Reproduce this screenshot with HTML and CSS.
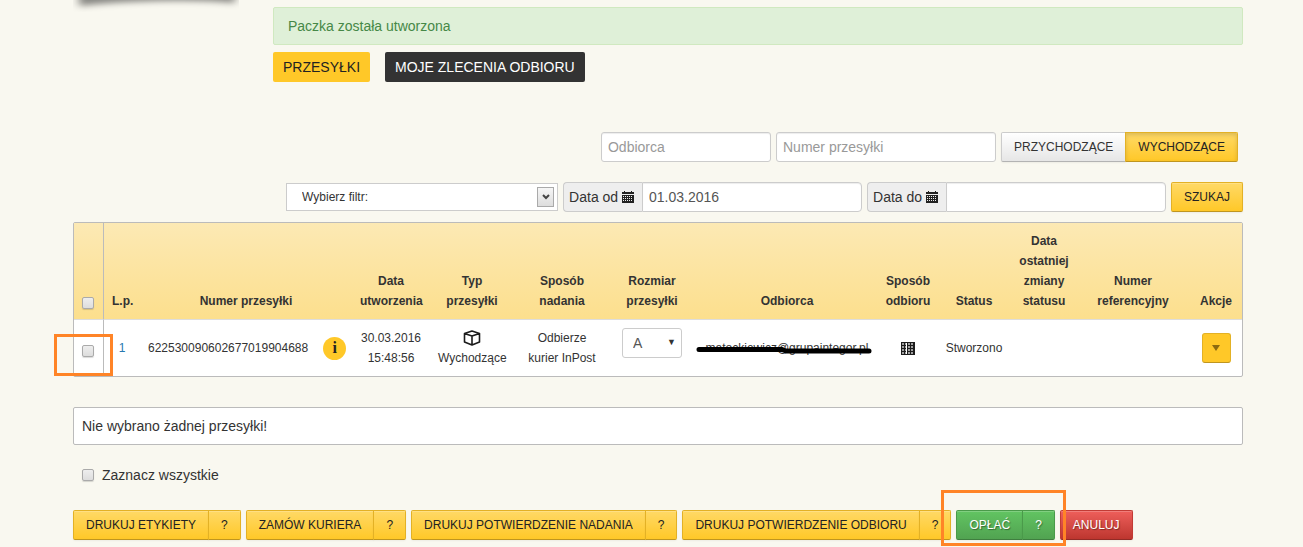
FILE: index.html
```html
<!DOCTYPE html>
<html lang="pl">
<head>
<meta charset="utf-8">
<title>Przesyłki</title>
<link rel="stylesheet" href="styles.css">
</head>
<body>
<svg class="defs" width="0" height="0" aria-hidden="true">
  <symbol id="calendar" viewBox="0 0 12 12">
    <path fill="#222" d="M0 1h2V0h1v1h6V0h1v1h2v2H0zM0 4h12v8H0z"/>
    <path stroke="#eee" stroke-width="1" stroke-dasharray="1 1" d="M1 5.5h10M1 7.5h10M1 9.5h10"/>
  </symbol>
</svg>
<div class="page">
  <header class="top">
    <div class="logo">
      <svg width="166" height="12" viewBox="0 0 166 12" aria-hidden="true">
        <defs>
          <filter id="soft" x="-10%" y="-100%" width="120%" height="300%"><feGaussianBlur stdDeviation="4 3"/></filter>
        </defs>
        <path filter="url(#soft)" fill="#000" fill-opacity=".45" d="M6-12H162V3Q130 0 85 1Q40 2 6 6z"/>
      </svg>
    </div>
    <div class="intro">
      <div class="alert" role="status">Paczka została utworzona</div>
      <nav class="tabs">
        <a class="tab tab-active" href="#">PRZESYŁKI</a>
        <a class="tab" href="#">MOJE ZLECENIA ODBIORU</a>
      </nav>
    </div>
  </header>

  <form class="filters">
    <div class="line line-search">
      <input class="field field-small" type="text" placeholder="Odbiorca" aria-label="Odbiorca">
      <input class="field" type="text" placeholder="Numer przesyłki" aria-label="Numer przesyłki">
      <div class="group">
        <button class="btn btn-light" type="button">PRZYCHODZĄCE</button><button class="btn btn-pressed" type="button">WYCHODZĄCE</button>
      </div>
    </div>
    <div class="line">
      <div class="filter-select">
        <select aria-label="Filtr"><option>Wybierz filtr:</option></select>
        <span class="arrow"><svg width="8" height="6" viewBox="0 0 8 6"><path d="M1 1l3 3 3-3" fill="none" stroke="#444" stroke-width="2"/></svg></span>
      </div>
      <div class="dated">
        <label for="from">Data od <svg width="12" height="12"><use href="#calendar"/></svg></label>
        <input class="field" id="from" type="text" value="01.03.2016">
      </div>
      <div class="dated">
        <label for="to">Data do <svg width="12" height="12"><use href="#calendar"/></svg></label>
        <input class="field" id="to" type="text">
      </div>
      <button class="btn" type="button">SZUKAJ</button>
    </div>
  </form>

  <table class="parcels">
    <colgroup>
      <col class="w-check"><col class="w-lp"><col class="w-number"><col class="w-date"><col class="w-type"><col class="w-send"><col class="w-size"><col class="w-person"><col class="w-pickup"><col class="w-status"><col class="w-change"><col class="w-ref"><col class="w-action">
    </colgroup>
    <thead>
      <tr>
        <th class="check"><input type="checkbox" aria-label="Zaznacz wszystkie"></th>
        <th>L.p.</th>
        <th>Numer przesyłki</th>
        <th>Data utworzenia</th>
        <th>Typ przesyłki</th>
        <th>Sposób nadania</th>
        <th>Rozmiar przesyłki</th>
        <th>Odbiorca</th>
        <th>Sposób odbioru</th>
        <th>Status</th>
        <th>Data ostatniej zmiany statusu</th>
        <th>Numer referencyjny</th>
        <th>Akcje</th>
      </tr>
    </thead>
    <tbody>
      <tr>
        <td class="check"><input type="checkbox" aria-label="Zaznacz przesyłkę 1"><span class="mark mark-row"></span></td>
        <td><a href="#">1</a></td>
        <td><div class="number"><span>622530090602677019904688</span><button class="info" type="button">i</button></div></td>
        <td>30.03.2016 15:48:56</td>
        <td>
          <svg class="box" width="18" height="16" viewBox="0 0 18 16" fill="none" stroke="#1c1c1c" stroke-width="1.6" stroke-linejoin="round"><path d="M9 1L16.500 3.500V12L9 15L1.500 12V3.500zM1.500 3.500L9 6L16.500 3.500M9 6V15"/></svg>
          Wychodzące
        </td>
        <td>Odbierze kurier InPost</td>
        <td class="size"><div class="size-select"><select aria-label="Rozmiar przesyłki"><option>A</option></select><span>▼</span></div></td>
        <td><div class="person">matockiewicz@grupaintegor.pl
          <svg class="scribble" viewBox="0 0 176 8" preserveAspectRatio="none" aria-hidden="true"><path d="M3 3.500H86L90 5H173" fill="none" stroke="#000" stroke-width="5" stroke-linecap="round"/></svg></div></td>
        <td><svg class="locker" width="14" height="13" viewBox="0 0 14 13"><path fill="#1c1c1c" d="M0 0h14v13H0z"/><path d="M1 2h12M1 5h12M1 8h12M1 11h12" stroke="#ccc" stroke-width="1.500" stroke-dasharray="2 1"/><path d="M5.500 1v11" stroke="#fff"/></svg></td>
        <td>Stworzono</td>
        <td></td>
        <td></td>
        <td><button class="more" type="button" aria-label="Akcje"><svg width="8" height="6" viewBox="0 0 8 6"><path d="M0 0h8L4 6z" fill="#8b6a10"/></svg></button></td>
      </tr>
    </tbody>
  </table>

  <div class="notice">Nie wybrano żadnej przesyłki!</div>
  <label class="all"><input type="checkbox"> Zaznacz wszystkie</label>

  <div class="actions">
    <div class="group"><button class="btn" type="button">DRUKUJ ETYKIETY</button><button class="btn" type="button">?</button></div>
    <div class="group"><button class="btn" type="button">ZAMÓW KURIERA</button><button class="btn" type="button">?</button></div>
    <div class="group"><button class="btn" type="button">DRUKUJ POTWIERDZENIE NADANIA</button><button class="btn" type="button">?</button></div>
    <div class="group"><button class="btn" type="button">DRUKUJ POTWIERDZENIE ODBIORU</button><button class="btn" type="button">?</button></div>
    <div class="group"><button class="btn btn-green" type="button">OPŁAĆ</button><button class="btn btn-green" type="button">?</button><span class="mark mark-pay"></span></div>
    <button class="btn btn-red" type="button">ANULUJ</button>
  </div>
</div>
</body>
</html>
```

FILE: styles.css
```css
* { box-sizing: border-box; }
body {
  margin: 0;
  background: #f9f8f0;
  color: #333;
  font: 14px/20px "Liberation Sans", Arial, sans-serif;
}
input, select, button { font: inherit; color: inherit; margin: 0; }
a { color: #2878b0; text-decoration: none; }
.defs { position: absolute; }
.page { padding: 0 60px 7px 73px; }

.top { display: flex; }
.logo { flex: 0 0 200px; }
.logo svg { display: block; }
.intro { flex: 1; padding-top: 7px; }
.alert {
  padding: 8px 14px;
  border: 1px solid #d0e9c0;
  border-radius: 2px;
  background: #dff0d8;
  color: #468847;
}
.tabs { display: flex; gap: 15px; margin-top: 7px; }
.tab { padding: 5px 10px; border-radius: 2px; background: #333; color: #fff; }
.tab-active { background: #ffc828; color: #222; }

.filters { display: flex; flex-direction: column; gap: 20px; margin: 50px 0 10px; }
.line { display: flex; justify-content: flex-end; align-items: center; gap: 5px; }
.line-search { padding-right: 5px; }
.field {
  width: 220px;
  height: 30px;
  padding: 4px 6px;
  border: 1px solid #ccc;
  border-radius: 3px;
  background: #fff;
  color: #555;
  box-shadow: inset 0 1px 1px rgba(0, 0, 0, .075);
}
.field::placeholder { color: #999; opacity: 1; }
.field-small { width: 170px; }

.group { position: relative; display: flex; }
.btn {
  height: 30px;
  padding: 4px 12px;
  border: 1px solid #e3b125;
  border-bottom-color: #bf951f;
  border-radius: 2px;
  background: linear-gradient(#ffd966, #ffc828);
  color: #222;
  font-size: 12px;
  white-space: nowrap;
  box-shadow: inset 0 1px 0 rgba(255, 255, 255, .2), 0 1px 2px rgba(0, 0, 0, .05);
}
.group .btn + .btn { margin-left: -1px; border-radius: 0 2px 2px 0; }
.group .btn:first-child { border-radius: 2px 0 0 2px; }
.btn-light { border-color: #ccc; border-bottom-color: #b3b3b3; background: linear-gradient(#fff, #e6e6e6); color: #333; }
.btn-pressed { box-shadow: inset 0 2px 4px rgba(0, 0, 0, .15); }
.btn-green, .btn-red { color: #fff; text-shadow: 1px 1px 1px rgba(0, 0, 0, .4); }
.btn-green { border-color: #4a9a4a; border-bottom-color: #3f7f3f; background: linear-gradient(#62c462, #51a351); }
.btn-red { border-color: #c23b35; border-bottom-color: #922b26; background: linear-gradient(#ee5f5b, #bd362f); }

.filter-select { position: relative; width: 272px; }
.filter-select select {
  display: block;
  width: 100%;
  height: 28px;
  padding: 0 26px 0 15px;
  border: 1px solid #ccc;
  border-radius: 0;
  background: #fff;
  font-size: 12px;
  appearance: none;
}
.arrow {
  position: absolute;
  top: 4px;
  right: 4px;
  display: grid;
  place-items: center;
  width: 17px;
  height: 20px;
  border: 1px solid #aaa;
  background: linear-gradient(#f6f6f6, #ddd);
  pointer-events: none;
}
.dated { display: flex; }
.dated label {
  padding: 4px 8px 4px 5px;
  border: 1px solid #ccc;
  border-right: 0;
  border-radius: 4px 0 0 4px;
  background: #eee;
}
.dated label svg { vertical-align: -1px; }
.dated .field { border-radius: 0 4px 4px 0; }

input[type="checkbox"] {
  display: block;
  width: 12px;
  height: 12px;
  border: 1px solid #aaa;
  border-radius: 2px;
  background: linear-gradient(#eee, #ddd);
  box-shadow: 0 1px 1px rgba(0, 0, 0, .15);
  appearance: none;
}

.parcels {
  width: 100%;
  table-layout: fixed;
  border: 1px solid #bbb;
  border-radius: 2px;
  border-spacing: 0;
  background: #fff;
  font-size: 12px;
  text-align: center;
}
.parcels thead { background: linear-gradient(#fce9b4, #fcdf8d); }
.parcels th { padding: 8px; vertical-align: bottom; }
.parcels th:nth-child(n+8) { padding: 8px 4px; }
.parcels td { padding: 8px; border-top: 1px solid #ddd; vertical-align: middle; }
.parcels .check { position: relative; padding: 8px 8px 10px; border-right: 1px solid #bbb; }
.parcels td.check { padding: 14px 8px 8px; }
.w-check { width: 30px; }
.w-lp { width: 36px; }
.w-number { width: 212px; }
.w-date { width: 78px; }
.w-type { width: 84px; }
.w-send { width: 96px; }
.w-size { width: 84px; }
.w-person { width: 186px; }
.w-pickup { width: 56px; }
.w-status { width: 76px; }
.w-change { width: 64px; }
.w-ref { width: 114px; }
.w-action { width: 52px; }
.number { display: flex; align-items: center; gap: 15px; }
.info {
  flex: none;
  width: 23px;
  height: 23px;
  padding: 0;
  border: 0;
  border-radius: 50%;
  background: #ffc828;
  color: #222;
  font: bold 16px/22px "Liberation Serif", serif;
}
.box { display: block; margin: 2px auto; }
.locker { display: block; margin: auto; }
.parcels .size { vertical-align: top; }
.size-select { position: relative; width: 60px; margin: auto; }
.size-select select {
  display: block;
  width: 100%;
  height: 30px;
  padding: 0 10px;
  border: 1px solid #ccc;
  border-radius: 3px;
  background: #fff;
  color: #555;
  font-size: 14px;
  appearance: none;
}
.size-select span { position: absolute; top: 4px; right: 6px; font-size: 9px; pointer-events: none; }
.person { position: relative; white-space: nowrap; }
.scribble { position: absolute; top: 8px; left: -6px; width: 176px; height: 8px; }
.more {
  display: grid;
  place-items: center;
  width: 29px;
  height: 30px;
  margin: auto;
  padding: 0;
  border: 1px solid #e3b125;
  border-bottom-color: #bf951f;
  border-radius: 3px;
  background: #ffc828;
}

.mark { position: absolute; border: 3px solid #ff8427; pointer-events: none; }
.mark-row { top: 14px; left: -20px; width: 59px; height: 42px; }
.mark-pay { top: -20px; left: -15px; width: 125px; height: 56px; z-index: 1; }

.notice { margin-top: 30px; padding: 8px; border: 1px solid #bbb; border-radius: 2px; background: #fff; }
.all { display: flex; align-items: center; gap: 8px; width: fit-content; margin: 20px 0 25px 9px; }
.actions { display: flex; gap: 5px; }
```
